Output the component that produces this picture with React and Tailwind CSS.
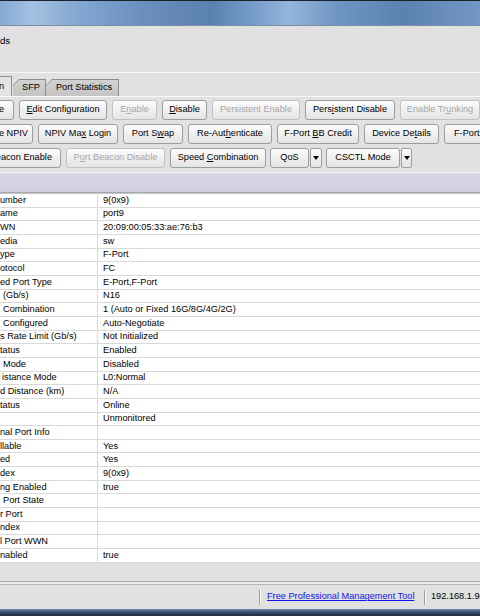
import React from "react";

const U = ({ children }) => <span className="underline">{children}</span>;

function Btn({ className = "", disabled = false, children }) {
  return (
    <div
      className={`h-[20px] shrink-0 flex items-center whitespace-nowrap rounded-[3px] border bg-[linear-gradient(180deg,#fcfcfc_0%,#f1f1f1_45%,#e4e4e4_100%)] ${
        disabled ? "border-[#c2c2c2] text-[#a6a6a6]" : "border-[#9d9d9d] text-black"
      } ${className}`}
    >
      <span>{children}</span>
    </div>
  );
}

function Arrow({ className = "" }) {
  return (
    <div
      className={`h-[20px] shrink-0 flex items-center justify-center rounded-[2px] border border-[#9d9d9d] bg-[linear-gradient(180deg,#fcfcfc_0%,#f1f1f1_45%,#e4e4e4_100%)] ${className}`}
    >
      <div className="w-0 h-0 border-l-[3px] border-r-[3px] border-t-[4px] border-l-transparent border-r-transparent border-t-black" />
    </div>
  );
}

const rows = [
  ["umber", "9(0x9)", "pl-0"],
  ["ame", "port9", "pl-0"],
  ["WN", "20:09:00:05:33:ae:76:b3", "pl-0"],
  ["edia", "sw", "pl-0"],
  ["ype", "F-Port", "pl-0"],
  ["otocol", "FC", "pl-0"],
  ["ed Port Type", "E-Port,F-Port", "pl-0"],
  ["(Gb/s)", "N16", "pl-[3px]"],
  ["Combination", "1 (Auto or Fixed 16G/8G/4G/2G)", "pl-[3px]"],
  ["Configured", "Auto-Negotiate", "pl-[3px]"],
  ["s Rate Limit (Gb/s)", "Not Initialized", "pl-0"],
  ["tatus", "Enabled", "pl-0"],
  ["Mode", "Disabled", "pl-[3px]"],
  ["istance Mode", "L0:Normal", "pl-[2px]"],
  ["d Distance (km)", "N/A", "pl-0"],
  ["tatus", "Online", "pl-0"],
  ["", "Unmonitored", "pl-0"],
  ["nal Port Info", "", "pl-0"],
  ["llable", "Yes", "pl-0"],
  ["ed", "Yes", "pl-0"],
  ["dex", "9(0x9)", "pl-0"],
  ["ng Enabled", "true", "pl-0"],
  ["Port State", "", "pl-[3px]"],
  ["r Port", "", "pl-0"],
  ["ndex", "", "pl-0"],
  ["l Port WWN", "", "pl-0"],
  ["nabled", "true", "pl-0"],
];

export default function App() {
  return (
    <div className="w-[480px] h-[616px] overflow-hidden bg-[#e1e1e1] text-black text-[9.2px] leading-none font-['Liberation_Sans','Arial',sans-serif] flex flex-col">
      {/* window title bar */}
      <div className="h-[1px] shrink-0 bg-[#1c2129]" />
      <div className="h-[24px] shrink-0 bg-[linear-gradient(90deg,#86aad3_0%,#a3c1e1_7%,#83a8d2_16%,#6a8fbe_30%,#5b81b1_44%,#7aa0cc_54%,#95b5db_60%,#7096c3_70%,#5c82b2_84%,#7498c5_100%)]" />
      <div className="h-[1px] shrink-0 bg-[#7d8ea2]" />

      {/* upper panel */}
      <div className="h-[46px] shrink-0 flex items-start pt-[10px]">
        <span className="text-[9.6px]">ds</span>
      </div>
      <div className="h-[1px] shrink-0 bg-[#f6f6f6]" />

      {/* tabs */}
      <div className="h-[23px] shrink-0 flex items-end">
        <div className="h-[20px] w-[12px] shrink-0 bg-[#e4e4e4] border-r border-t border-[#8f8f8f] flex items-center justify-end pr-[7px]">
          <span>n</span>
        </div>
        <div className="h-[17px] w-[33px] shrink-0 ml-[1px] bg-[#8c8c8c] pt-[1px] pr-[1px] [clip-path:polygon(6px_0,100%_0,100%_100%,0_100%,0_6px)]">
          <div className="h-full w-full bg-[linear-gradient(180deg,#d2d2d2,#c4c4c4)] flex items-center justify-center pl-[4px] [clip-path:polygon(6px_0,100%_0,100%_100%,0_100%,0_6px)]">
            <span>SFP</span>
          </div>
        </div>
        <div className="h-[17px] w-[73px] shrink-0 bg-[#8c8c8c] pt-[1px] pr-[1px] [clip-path:polygon(6px_0,100%_0,100%_100%,0_100%,0_6px)]">
          <div className="h-full w-full bg-[linear-gradient(180deg,#d2d2d2,#c4c4c4)] flex items-center justify-center pl-[4px] [clip-path:polygon(6px_0,100%_0,100%_100%,0_100%,0_6px)]">
            <span>Port Statistics</span>
          </div>
        </div>
      </div>
      <div className="h-[1px] shrink-0 bg-[#f8f8f8]" />

      {/* button rows */}
      <div className="shrink-0 flex flex-col gap-[4px] pt-[3px]">
        <div className="flex gap-[5px]">
          <Btn className="w-[53px] ml-[-39px] justify-end pr-[9px]">Rename</Btn>
          <Btn className="w-[88px] justify-center">
            <U>E</U>dit Configuration
          </Btn>
          <Btn className="w-[45px] justify-center" disabled>
            E<U>n</U>able
          </Btn>
          <Btn className="w-[45px] justify-center">
            <U>D</U>isable
          </Btn>
          <Btn className="w-[88px] justify-center" disabled>
            Persistent Enable
          </Btn>
          <Btn className="w-[90px] justify-center">
            Pers<U>i</U>stent Disable
          </Btn>
          <Btn className="w-[80px] justify-center" disabled>
            Enable Tr<U>u</U>nking
          </Btn>
        </div>
        <div className="flex gap-[5px]">
          <Btn className="w-[73px] ml-[-40px] justify-end pr-[4px]">Disable NPIV</Btn>
          <Btn className="w-[80px] justify-center">
            NPIV Ma<U>x</U> Login
          </Btn>
          <Btn className="w-[60px] justify-center">
            Port S<U>w</U>ap
          </Btn>
          <Btn className="w-[84px] justify-center">
            Re-Aut<U>h</U>enticate
          </Btn>
          <Btn className="w-[82px] justify-center">
            F-Port <U>B</U>B Credit
          </Btn>
          <Btn className="w-[75px] justify-center">
            Device De<U>t</U>ails
          </Btn>
          <Btn className="w-[85px] justify-start pl-[9px]">F-Port Trunking</Btn>
        </div>
        <div className="flex gap-[5px]">
          <Btn className="w-[100px] ml-[-39px] justify-end pr-[8px]">Port Beacon Enable</Btn>
          <Btn className="w-[99px] justify-center" disabled>
            P<U>o</U>rt Beacon Disable
          </Btn>
          <Btn className="w-[96px] justify-center">
            Speed <U>C</U>ombination
          </Btn>
          <div className="flex gap-[1px] ml-[-1px]">
            <Btn className="w-[39px] justify-center">QoS</Btn>
            <Arrow className="w-[12px]" />
          </div>
          <div className="flex gap-[1px] ml-[-1px]">
            <Btn className="w-[74px] justify-center">CSCTL Mode</Btn>
            <Arrow className="w-[11px]" />
          </div>
        </div>
      </div>

      {/* table */}
      <div className="h-[4px] shrink-0" />
      <div className="h-[1px] shrink-0 bg-[#f2f2f2]" />
      <div className="h-[1px] shrink-0" />
      <div className="h-[19px] shrink-0 bg-[linear-gradient(180deg,#d6d6e3,#cfcfde)] border-b border-[#a6a6b2]" />
      <div className="h-[1px] shrink-0 bg-[#c6c6c6]" />
      <div className="h-[369px] shrink-0 overflow-hidden bg-white">
        {rows.map(([label, value, pad], i) => (
          <div key={i} className="h-[13.67px] flex border-b border-[#d9d9d9]">
            <div
              className={`w-[98px] shrink-0 border-r border-[#d9d9d9] flex items-center whitespace-nowrap overflow-hidden ${pad}`}
            >
              <span>{label}</span>
            </div>
            <div className="flex-1 flex items-center pl-[5px] whitespace-nowrap">
              <span>{value}</span>
            </div>
          </div>
        ))}
      </div>

      {/* lower area */}
      <div className="h-[18px] shrink-0" />
      <div className="h-[1px] shrink-0 bg-[#a9a9a9]" />
      <div className="h-[2px] shrink-0 bg-[#ececec]" />
      <div className="h-[1px] shrink-0 bg-[#b6b6b6]" />

      {/* status bar */}
      <div className="h-[24px] shrink-0 flex items-center whitespace-nowrap">
        <div className="w-[259px] shrink-0" />
        <div className="w-[1px] h-[15px] shrink-0 bg-[#9b9b9b]" />
        <div className="w-[1px] h-[15px] shrink-0 bg-[#fafafa]" />
        <div className="w-[163px] shrink-0 pl-[6px]">
          <span className="text-[#1414f0] underline">Free Professional Management Tool</span>
        </div>
        <div className="w-[1px] h-[15px] shrink-0 bg-[#9b9b9b]" />
        <div className="w-[1px] h-[15px] shrink-0 bg-[#fafafa]" />
        <div className="pl-[5px]">
          <span>192.168.1.96</span>
        </div>
      </div>

      {/* taskbar strip */}
      <div className="flex-1 bg-[linear-gradient(180deg,#6f8aad_0%,#3f5672_40%,#1e2a3a_100%)]" />
    </div>
  );
}
